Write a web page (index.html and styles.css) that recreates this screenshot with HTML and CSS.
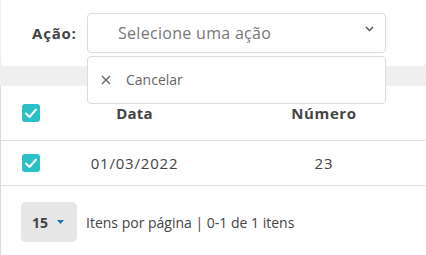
FILE: index.html
```html
<!DOCTYPE html>
<html>
<head>
<meta charset="utf-8">
<link rel="stylesheet" href="styles.css">
</head>
<body>
<div class="top">
  <label class="lbl">Ação:</label>
  <div class="selwrap">
    <div class="select">
      <span class="ph">Selecione uma ação</span>
      <svg class="chev" width="9" height="6" viewBox="0 0 9 6"><path d="M1 1 L4.5 4.5 L8 1" fill="none" stroke="#555" stroke-width="1.5"/></svg>
    </div>
    <div class="menu">
      <div class="item">
        <svg class="x" width="10" height="10" viewBox="0 0 10 10"><path d="M1 1 L9 9 M9 1 L1 9" stroke="#666" stroke-width="1.4"/></svg>
        <span>Cancelar</span>
      </div>
    </div>
  </div>
</div>
<div class="band"></div>
<div class="card">
  <div class="row head">
    <div class="c-chk"><span class="chk"><svg width="14" height="12" viewBox="0 0 14 12"><path d="M2 6.5 L5.5 10 L12 2.5" fill="none" stroke="#fff" stroke-width="2" stroke-linecap="round" stroke-linejoin="round"/></svg></span></div>
    <div class="c-data">Data</div>
    <div class="c-num">Número</div>
  </div>
  <div class="row body">
    <div class="c-chk"><span class="chk"><svg width="14" height="12" viewBox="0 0 14 12"><path d="M2 6.5 L5.5 10 L12 2.5" fill="none" stroke="#fff" stroke-width="2" stroke-linecap="round" stroke-linejoin="round"/></svg></span></div>
    <div class="c-data">01/03/2022</div>
    <div class="c-num">23</div>
  </div>
  <div class="pager">
    <div class="pp">15 <svg width="7" height="4" viewBox="0 0 7 4"><path d="M0 0 L7 0 L3.5 4 Z" fill="#1f6fb8"/></svg></div>
    <span class="info">Itens por página | 0-1 de 1 itens</span>
  </div>
</div>
</body>
</html>
```
FILE: styles.css
```css
* { box-sizing: border-box; }
html, body { margin: 0; padding: 0; }
body {
  width: 426px;
  height: 255px;
  overflow: hidden;
  background: #efefef;
  font-family: "Open Sans", "Noto Sans", sans-serif;
  color: #444;
}
.top {
  position: relative;
  z-index: 2;
  background: #fff;
  height: 66px;
  margin-left: 1px;
  border-radius: 0 0 4px 4px;
  display: flex;
  align-items: flex-start;
  padding-top: 13px;
}
.lbl {
  width: 86px;
  padding-left: 31px;
  height: 40px;
  line-height: 40px;
  font-weight: 700;
  font-size: 15px;
  letter-spacing: 0.8px;
  color: #444;
}
.selwrap { position: relative; width: 299px; }
.select {
  height: 40px;
  border: 1px solid #dcdcdc;
  border-radius: 4px;
  background: #fff;
  display: flex;
  align-items: center;
  padding-left: 30px;
  padding-right: 11px;
}
.ph { font-size: 16px; letter-spacing: 0.3px; color: #777; flex: 1; }
.chev { margin-top: -9px; }
.menu {
  position: absolute;
  top: 43px;
  left: 0;
  width: 299px;
  height: 48px;
  background: #fff;
  border: 1px solid #dcdcdc;
  border-radius: 4px;
}
.item {
  display: flex;
  align-items: center;
  height: 44px;
  padding-left: 13px;
  font-size: 14px;
  color: #666;
}
.item .x { margin-right: 15px; margin-top: 2px; }
.band { height: 20px; }
.card {
  background: #fff;
  border-left: 1px solid #dcdcdc;
  height: 169px;
}
.row {
  display: flex;
  align-items: center;
  height: 55px;
  border-bottom: 1px solid #dedede;
}
.row.body { height: 45px; }
.c-chk { width: 71px; padding-left: 21px; display: flex; }
.chk {
  width: 18px; height: 18px;
  border-radius: 3px;
  background: #2bbfc7;
  display: flex; align-items: center; justify-content: center;
}
.c-data { width: 125px; text-align: center; font-size: 15px; letter-spacing: 0.8px; }
.c-num { width: 130px; margin-left: 62px; text-align: center; font-size: 15px; letter-spacing: 0.8px; }
.head { font-weight: 700; color: #444; }
.head .c-data { letter-spacing: 0.2px; }
.head .c-num { letter-spacing: 0.6px; }
.body .c-data, .body .c-num { color: #444; }
.pager {
  display: flex;
  align-items: center;
  padding: 16px 0 0 20px;
}
.pp {
  width: 56px; height: 40px;
  background: #e6e6e6;
  border-radius: 5px;
  display: flex; align-items: center;
  padding-left: 11px;
  font-weight: 700;
  font-size: 14px;
  color: #444;
  gap: 9px;
}
.info { margin-left: 9px; font-size: 14px; color: #444; }
```
